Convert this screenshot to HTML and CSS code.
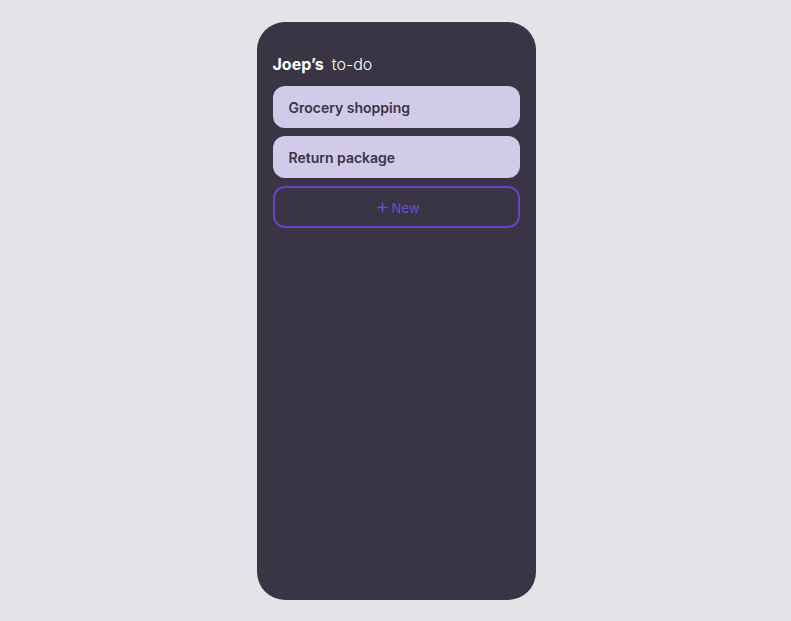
FILE: index.html
```html
<!DOCTYPE html>
<html lang="en">
<head>
<meta charset="utf-8">
<title>Joep's to-do</title>
<link rel="stylesheet" href="styles.css">
</head>
<body>
<main class="card">
  <h1 class="title"><span class="owner">Joep’s</span><span class="list-name">to-do</span></h1>
  <ul class="items">
    <li class="item">Grocery shopping</li>
    <li class="item">Return package</li>
  </ul>
  <button class="new-btn" type="button">
    <svg class="plus" width="11" height="11" viewBox="0 0 11 11" aria-hidden="true"><path d="M5.5 0.5V10.5M0.5 5.5H10.5" stroke="currentColor" stroke-width="1.5" fill="none"/></svg>
    <span>New</span>
  </button>
</main>
</body>
</html>
```
FILE: styles.css
```css
html, body {
  margin: 0;
  padding: 0;
  height: 100%;
}
body {
  background: #e4e3e8;
  font-family: Inter, "Noto Sans", sans-serif;
  display: flex;
  align-items: center;
  justify-content: center;
}
.card {
  width: 279px;
  height: 578px;
  box-sizing: border-box;
  background: #393545;
  border-radius: 28px;
  padding: 32px 16px 16px;
  display: flex;
  flex-direction: column;
  margin-left: 1px;
}
.title {
  margin: 0 0 12px;
  font-size: 16px;
  line-height: 20px;
  color: #ffffff;
  display: flex;
  gap: 8px;
}
.owner {
  font-weight: 700;
}
.list-name {
  font-weight: 300;
}
.items {
  list-style: none;
  margin: 0;
  padding: 0;
  display: flex;
  flex-direction: column;
  gap: 8px;
}
.item {
  height: 42px;
  box-sizing: border-box;
  background: #d1cae8;
  border-radius: 12px;
  padding: 1px 16px 0;
  display: flex;
  align-items: center;
  font-size: 14px;
  font-weight: 600;
  color: #3a3447;
}
.new-btn {
  margin-top: 8px;
  height: 42px;
  box-sizing: border-box;
  background: transparent;
  border: 2px solid #6843c9;
  border-radius: 12px;
  display: flex;
  align-items: center;
  justify-content: center;
  gap: 4px;
  color: #6b50c8;
  font-family: inherit;
  font-size: 13px;
  font-weight: 400;
  padding: 3px 0 0 4px;
}
.plus {
  display: block;
  margin-top: -2px;
}
```
